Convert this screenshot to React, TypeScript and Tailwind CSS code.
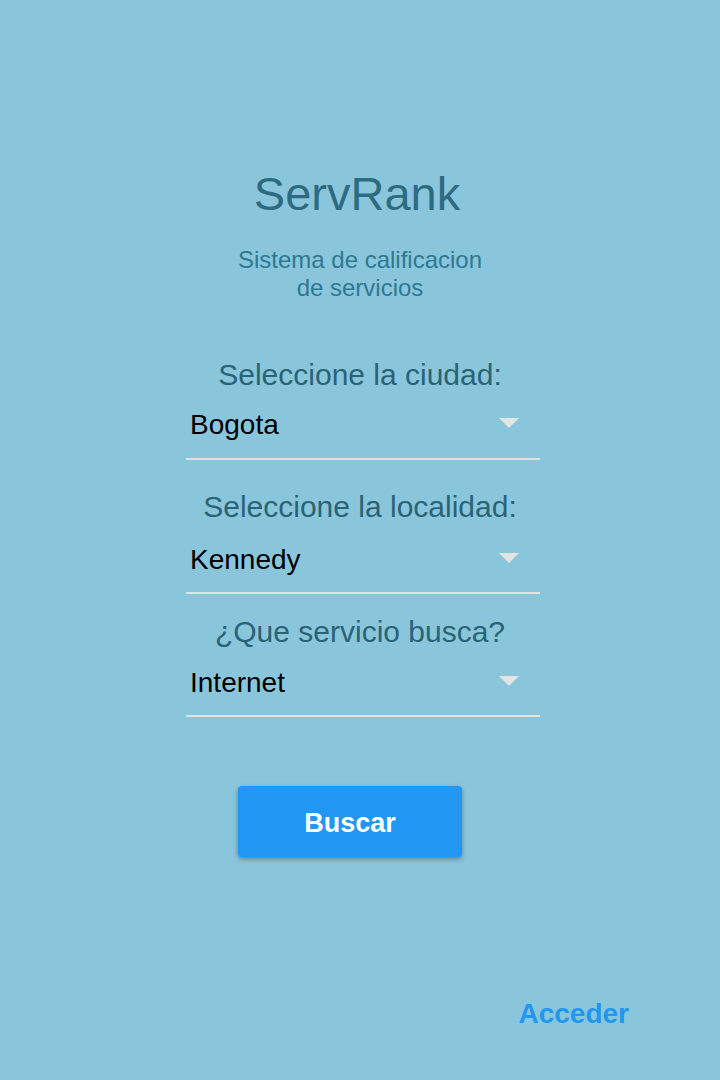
import React from "react";

const Arrow = () => (
  <svg width="20" height="10" viewBox="0 0 20 10" className="mt-[11px] shrink-0">
    <polygon points="0,0 20,0 10,10" fill="#e3e3e3" />
  </svg>
);

const Select = ({ value, mt, pb }: { value: string; mt: string; pb: string }) => (
  <div
    className={`${mt} ${pb} ml-[6px] w-[354px] flex items-start justify-between border-b-2 border-[#e2e2e2] pl-[4px] pr-[21px]`}
  >
    <span className="text-[28px] leading-[36px] text-black">{value}</span>
    <Arrow />
  </div>
);

export default function App() {
  return (
    <div
      className="min-h-screen w-full bg-[#8ac6db] flex flex-col items-center"
      style={{ fontFamily: '"Liberation Sans", Arial, Helvetica, sans-serif' }}
    >
      <h1 className="mt-[166px] mr-[6px] text-[47px] leading-[56px] text-[#2e6b80] font-normal">
        ServRank
      </h1>
      <p className="mt-[24px] text-[24px] leading-[28px] text-[#2f7892] text-center">
        Sistema de calificacion
        <br />
        de servicios
      </p>

      <div className="mt-[55px] text-[30px] leading-[36px] text-[#2a6376]">Seleccione la ciudad:</div>
      <Select value="Bogota" mt="mt-[14px]" pb="pb-[15px]" />

      <div className="mt-[29px] text-[30px] leading-[36px] text-[#2a6376]">Seleccione la localidad:</div>
      <Select value="Kennedy" mt="mt-[17px]" pb="pb-[14px]" />

      <div className="mt-[20px] text-[30px] leading-[36px] text-[#2a6376]">¿Que servicio busca?</div>
      <Select value="Internet" mt="mt-[15px]" pb="pb-[14px]" />

      <button
        type="button"
        className="mt-[69px] mr-[20px] w-[224px] h-[71px] pt-[4px] rounded-[4px] bg-[#2196f3] text-white font-bold text-[27px] shadow-[0_2px_5px_rgba(0,0,0,0.35)]"
      >
        Buscar
      </button>

      <a className="mt-[140px] self-end mr-[91px] text-[28px] leading-[34px] font-bold text-[#2196f3]">
        Acceder
      </a>
    </div>
  );
}
